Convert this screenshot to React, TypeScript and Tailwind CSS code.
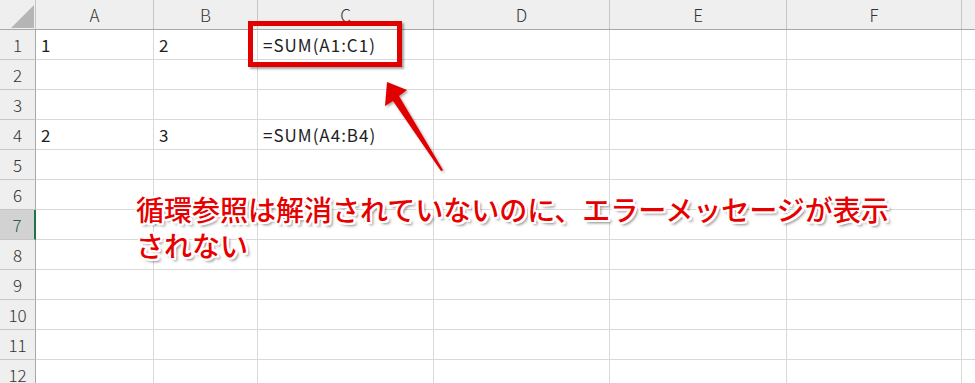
const cols = [
  { id: "A", w: "w-[118px]" },
  { id: "B", w: "w-[104px]" },
  { id: "C", w: "w-[176px]" },
  { id: "D", w: "w-[176px]" },
  { id: "E", w: "w-[177px]" },
  { id: "F", w: "w-[175px]" },
];

const cells: Record<string, string> = {
  A1: "1",
  B1: "2",
  C1: "=SUM(A1:C1)",
  A4: "2",
  B4: "3",
  C4: "=SUM(A4:B4)",
};

const rows = [1, 2, 3, 4, 5, 6, 7, 8, 9, 10, 11, 12];

export default function App() {
  return (
    <div className="relative w-[975px] h-[383px] overflow-hidden bg-white font-['Noto_Sans_CJK_JP',sans-serif] text-[#222]">
      {/* header row */}
      <div className="flex h-[30px] bg-[#efefef] border-b border-[#a8a8a8]">
        <div className="relative w-[36px] shrink-0 border-r border-[#c6c6c6]">
          <svg className="absolute left-[11px] top-[5px]" width="23" height="23" viewBox="0 0 23 23">
            <polygon points="23,0 23,23 0,23" fill="#b5b5b5" />
          </svg>
        </div>
        {cols.map((c) => (
          <div
            key={c.id}
            className={`${c.w} shrink-0 flex items-center justify-center border-r border-[#c6c6c6] text-[17px] font-light text-[#333]`}
          >
            {c.id}
          </div>
        ))}
        <div className="flex-1" />
      </div>

      {/* body rows */}
      {rows.map((r) => (
        <div key={r} className="flex h-[30px]">
          <div
            className={`w-[36px] shrink-0 flex items-center justify-center text-[17px] font-light border-b ${
              r === 7
                ? "bg-[#d2d2d2] border-r-2 border-r-[#217346] border-b-[#c6c6c6] text-[#2b5e46]"
                : "bg-[#efefef] border-r border-r-[#a8a8a8] border-b-[#c6c6c6] text-[#333]"
            }`}
          >
            {r}
          </div>
          {cols.map((c) => (
            <div
              key={c.id}
              className={`${c.w} shrink-0 flex items-center pl-[5px] border-r border-b border-[#d9d9d9] text-[17px] tracking-[1px] text-[#222]`}
            >
              {cells[`${c.id}${r}`] ?? ""}
            </div>
          ))}
          <div className="flex-1 border-b border-[#d9d9d9]" />
        </div>
      ))}

      {/* red highlight box */}
      <div className="absolute left-[248px] top-[21px] w-[154px] h-[46px] border-[5px] border-[#e00000] shadow-[2px_2px_2px_rgba(0,0,0,0.35)]" />

      {/* arrow */}
      <svg className="absolute left-0 top-0" width="975" height="383" viewBox="0 0 975 383">
        <defs>
          <filter id="sh" x="-20%" y="-20%" width="140%" height="140%">
            <feDropShadow dx="1.5" dy="1.5" stdDeviation="1" floodColor="#000" floodOpacity="0.35" />
          </filter>
        </defs>
        <g filter="url(#sh)" fill="#e00000">
          <polygon points="387,82 407,90 399,96 443,170 441,171 393,101 385,106" />
        </g>
      </svg>

      {/* callout text */}
      <div className="absolute left-[136px] top-[191px] text-[28px] leading-[36px] font-medium text-[#e60000] [text-shadow:-2px_-2px_0_#fff,2px_-2px_0_#fff,-2px_2px_0_#fff,2px_2px_0_#fff,0_-2px_0_#fff,0_2px_0_#fff,-2px_0_0_#fff,2px_0_0_#fff,3px_3px_3px_rgba(0,0,0,0.5)]">
        循環参照は解消されていないのに、エラーメッセージが表示
        <br />
        されない
      </div>
    </div>
  );
}
